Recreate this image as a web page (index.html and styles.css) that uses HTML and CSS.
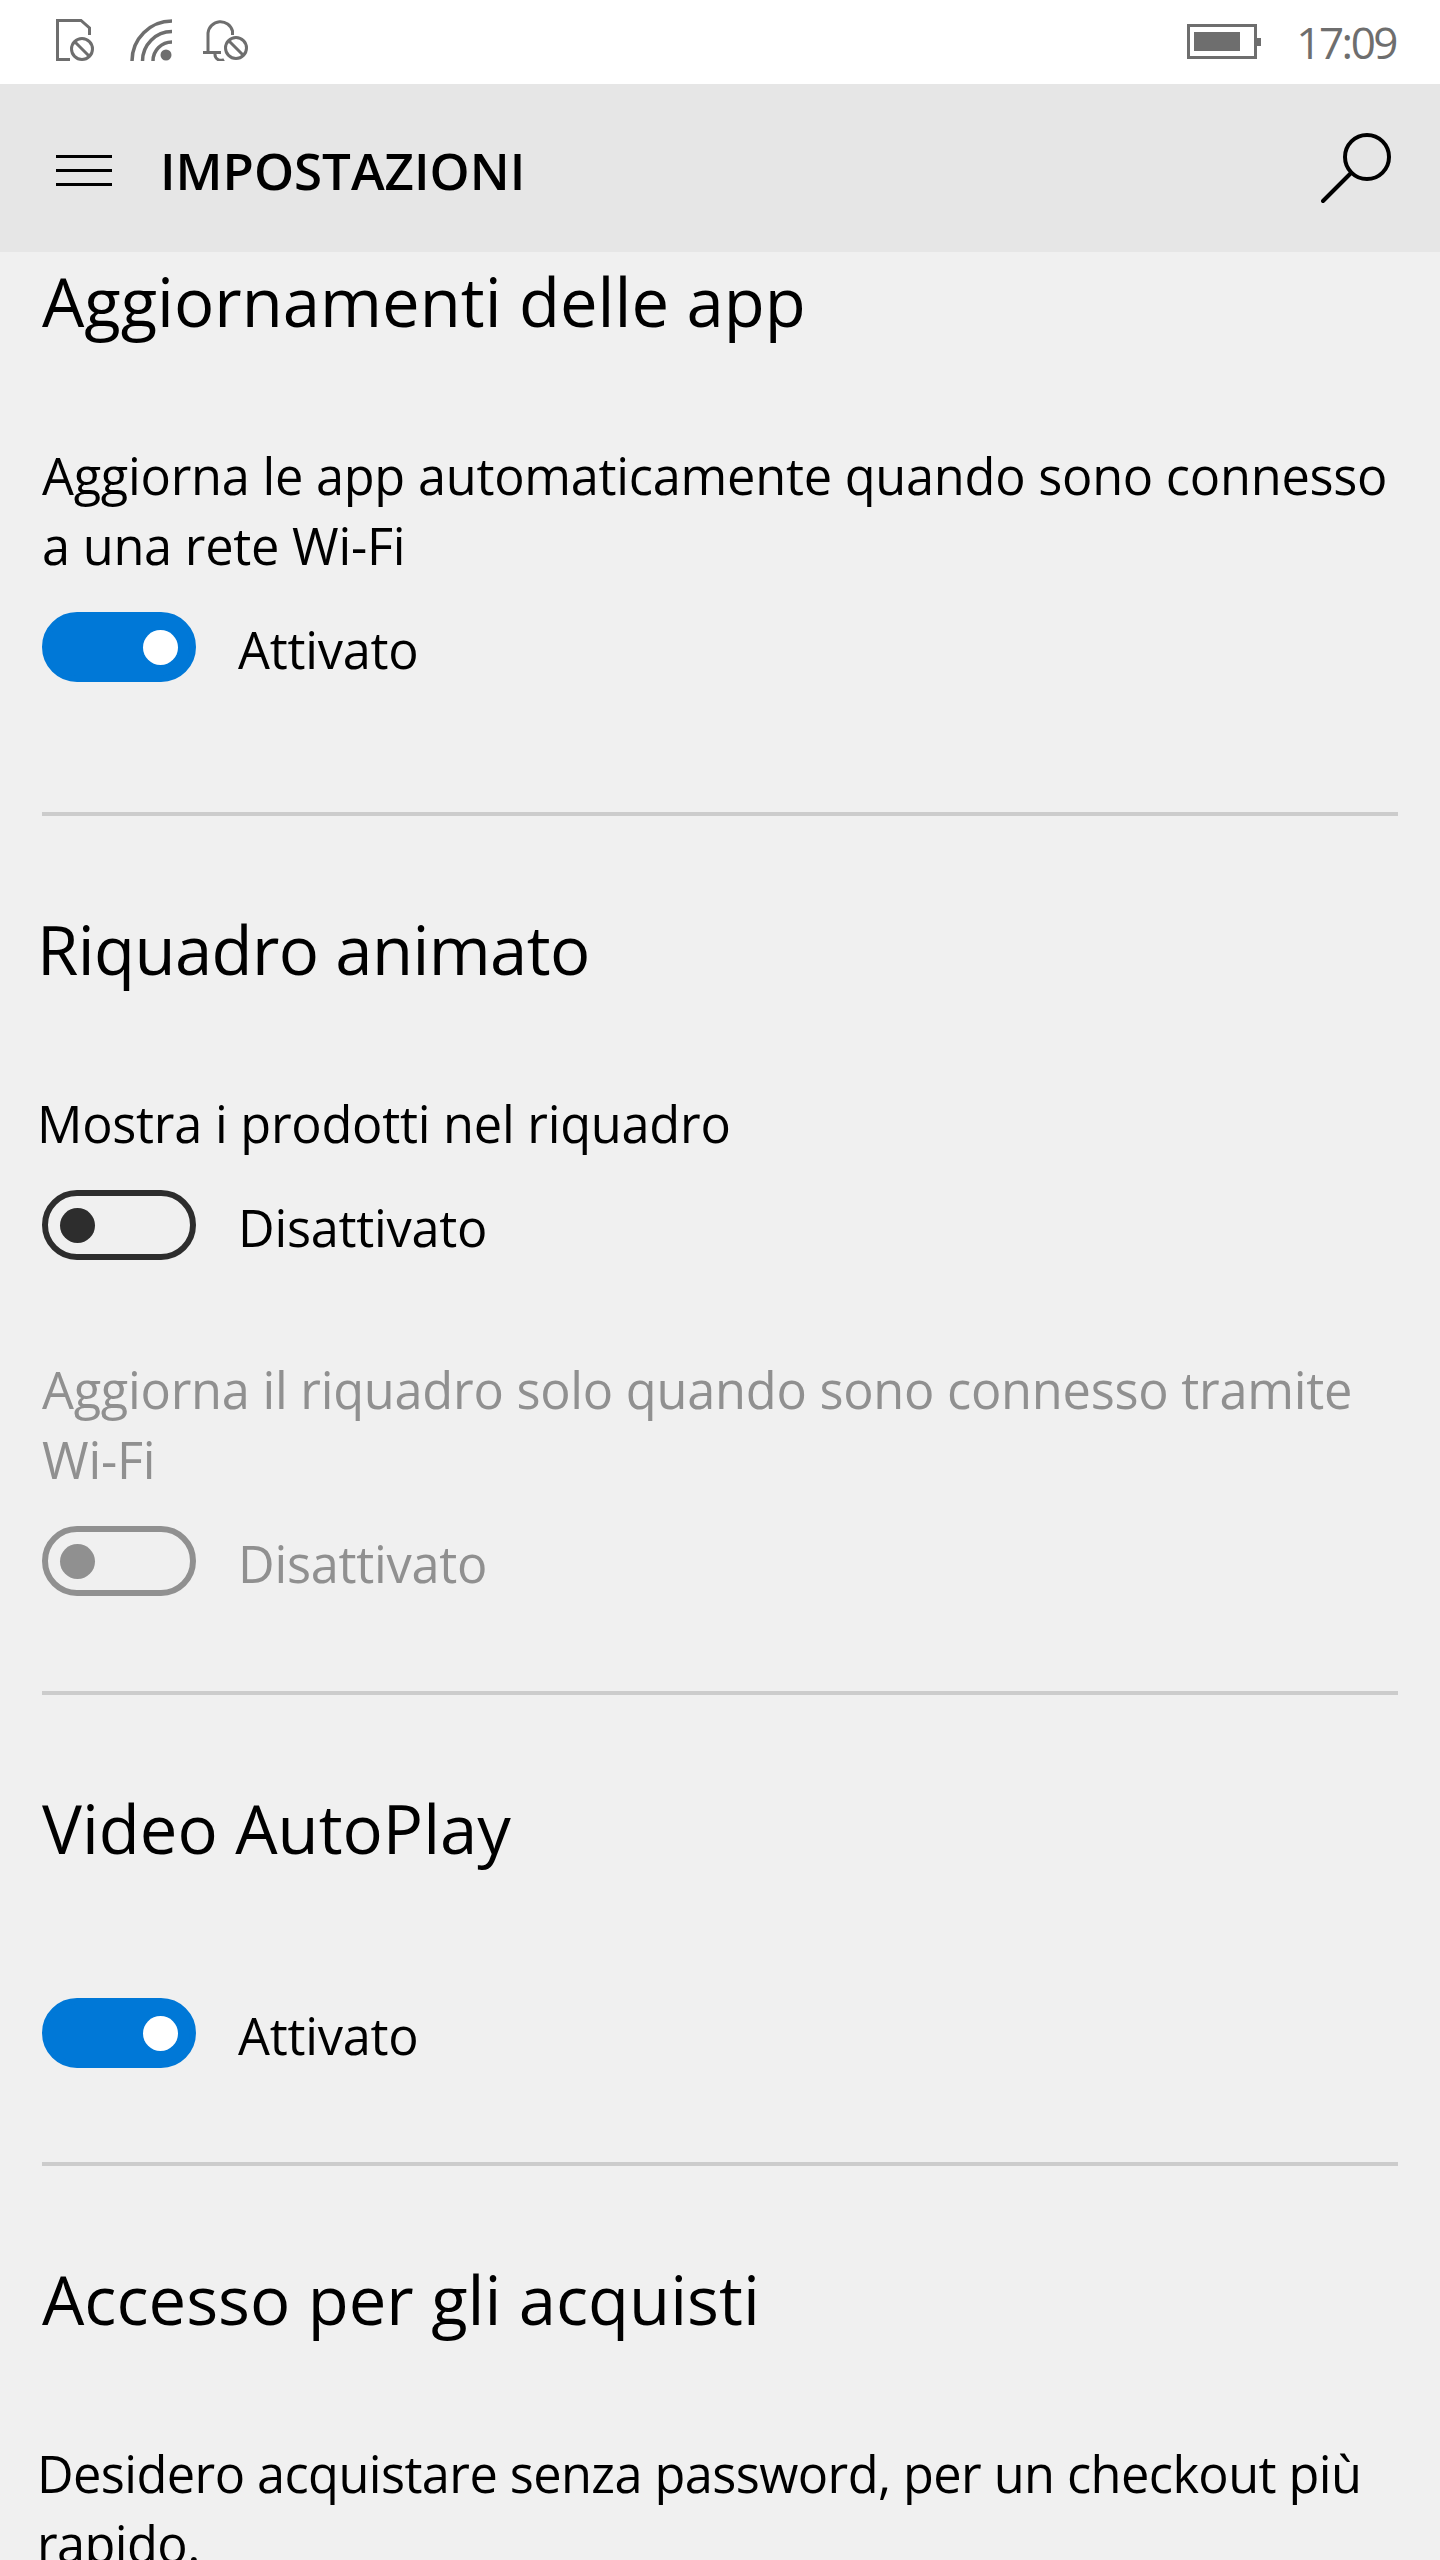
FILE: index.html
```html
<!DOCTYPE html>
<html lang="it">
  <head>
    <meta charset="UTF-8" />
    <meta name="viewport" content="width=device-width, initial-scale=1.0" />
    <title>Impostazioni</title>
    <link rel="stylesheet" href="styles.css">
  </head>
  <body>
    <div class="status-bar">
      <div class="status-icons">
        <svg class="icon-file" width="40" height="42" viewBox="0 0 40 42" fill="none" stroke="#6e6e6e" stroke-width="3">
          <path d="M14 40.5H1.5V1.5H25L33.5 9V16" />
          <circle cx="26" cy="30" r="10.5" />
          <path d="M19 23L33 37" />
        </svg>
        <svg class="icon-wifi" width="44" height="42" viewBox="0 0 44 42" fill="none" stroke="#6e6e6e" stroke-width="3.5">
          <path d="M43 2A40 40 0 0 0 3 42" />
          <path d="M43 12.5A29.5 29.5 0 0 0 13.5 42" />
          <path d="M43 23A19 19 0 0 0 24 42" />
          <circle cx="37" cy="36" r="5.5" fill="#6e6e6e" stroke="none" />
        </svg>
        <svg class="icon-bell" width="46" height="42" viewBox="0 0 46 42" fill="none" stroke="#6e6e6e" stroke-width="3">
          <path d="M0 33.5H18" />
          <path d="M5 33.5V14A12.5 12.5 0 0 1 29.5 12V16" />
          <path d="M12 35A6 6 0 0 0 21 40.5" />
          <circle cx="33" cy="29" r="10.5" />
          <path d="M26 22L40 36" />
        </svg>
      </div>
      <div class="status-right">
        <div class="battery">
          <div class="battery-body"><div class="battery-fill"></div></div>
          <div class="battery-tip"></div>
        </div>
        <span class="clock">17:09</span>
      </div>
    </div>

    <header class="top-bar">
      <div class="top-left">
        <div class="hamburger"><span></span><span></span><span></span></div>
        <h1>IMPOSTAZIONI</h1>
      </div>
      <svg class="icon-search" width="72" height="72" viewBox="0 0 72 72" fill="none" stroke="#000" stroke-width="4" stroke-linecap="round">
        <circle cx="46" cy="25" r="22" />
        <path d="M30 41L2 69" />
      </svg>
    </header>

    <main>
      <section class="group first">
        <h2>Aggiornamenti delle app</h2>
        <div class="setting">
          <p class="label">Aggiorna le app automaticamente quando sono connesso<br>a una rete Wi-Fi</p>
          <div class="switch-row">
            <div class="switch on"><span class="knob"></span></div>
            <span class="state">Attivato</span>
          </div>
        </div>
      </section>

      <section class="group">
        <h2 class="nudge tight">Riquadro animato</h2>
        <div class="setting">
          <p class="label nudge">Mostra i prodotti nel riquadro</p>
          <div class="switch-row">
            <div class="switch"><span class="knob"></span></div>
            <span class="state">Disattivato</span>
          </div>
        </div>
        <div class="setting disabled">
          <p class="label">Aggiorna il riquadro solo quando sono connesso tramite<br>Wi-Fi</p>
          <div class="switch-row">
            <div class="switch"><span class="knob"></span></div>
            <span class="state">Disattivato</span>
          </div>
        </div>
      </section>

      <section class="group">
        <h2>Video AutoPlay</h2>
        <div class="setting no-label">
          <div class="switch-row">
            <div class="switch on"><span class="knob"></span></div>
            <span class="state">Attivato</span>
          </div>
        </div>
      </section>

      <section class="group last">
        <h2>Accesso per gli acquisti</h2>
        <div class="setting">
          <p class="label nudge tight">Desidero acquistare senza password, per un checkout più<br>rapido.</p>
        </div>
      </section>
    </main>
  </body>
</html>
```

FILE: styles.css
```css
* {
  box-sizing: border-box;
}

html,
body {
  height: 2560px;
  margin: 0;
  overflow: hidden;
}

body {
  background: #f0f0f0;
  color: #000;
  font-family: "Open Sans", "Noto Sans", sans-serif;
  font-size: 50.5px;
}

p,
h1,
h2 {
  margin: 0;
}

.status-bar {
  height: 84px;
  background: #fff;
  display: flex;
  justify-content: space-between;
  padding: 19px 44px 0 56px;
}

.status-icons {
  display: flex;
  align-items: flex-start;
  gap: 33px;
}

.icon-bell {
  margin-left: -3px;
}

.status-right {
  display: flex;
  align-items: flex-start;
  gap: 35px;
}

.battery {
  display: flex;
  align-items: center;
  margin-top: 5px;
}

.battery-body {
  width: 70px;
  height: 35px;
  border: 3px solid #6e6e6e;
  padding: 5px 4px;
}

.battery-fill {
  width: 46px;
  height: 100%;
  background: #6e6e6e;
}

.battery-tip {
  width: 4px;
  height: 8px;
  background: #6e6e6e;
}

.clock {
  color: #6e6e6e;
  font-size: 44px;
  line-height: 46px;
  letter-spacing: -2.5px;
}

.top-bar {
  height: 168px;
  background: #e6e6e6;
  display: flex;
  justify-content: space-between;
  align-items: flex-start;
  padding: 48px 47px 0 56px;
}

.top-left {
  display: flex;
  align-items: center;
  gap: 48px;
  height: 76px;
}

.hamburger {
  width: 56px;
  display: grid;
  gap: 11px;

  span {
    display: block;
    height: 3px;
    background: #000;
  }
}

h1 {
  font-size: 51px;
  font-weight: 600;
  line-height: 76px;
}

.group {
  margin: 0 42px;
  padding-top: 88px;
  padding-bottom: 95px;
  border-bottom: 4px solid #ccc;
}

.group.first {
  padding-top: 4px;
  padding-bottom: 130px;
}

.group.last {
  border-bottom: 0;
}

h2 {
  font-size: 67px;
  font-weight: 400;
  line-height: 90px;
}

.nudge {
  margin-left: -5px;
}

.setting {
  margin-top: 93px;
}

.setting.no-label {
  margin-top: 125px;
  margin-bottom: -1px;
}

.label {
  padding-top: 2px;
  line-height: 70px;
  letter-spacing: -0.25px;
  white-space: nowrap;
}

h2.tight {
  letter-spacing: -0.6px;
}

.label.tight {
  letter-spacing: -0.58px;
}

.switch-row {
  margin-top: 31px;
  display: flex;
  align-items: center;
  gap: 42px;
  height: 70px;
  letter-spacing: -0.25px;
}

.no-label .switch-row {
  margin-top: 0;
}

.state {
  padding-top: 5px;
}

.switch {
  width: 154px;
  height: 70px;
  border: 6px solid #2d2d2d;
  border-radius: 35px;
  padding: 0 12px;
  display: flex;
  align-items: center;

  .knob {
    width: 35px;
    height: 35px;
    border-radius: 50%;
    background: #2d2d2d;
  }

  &.on {
    background: #0078d7;
    border-color: #0078d7;
    justify-content: flex-end;

    .knob {
      background: #fff;
    }
  }
}

.disabled {
  color: #909090;

  .switch {
    border-color: #909090;
  }

  .knob {
    background: #909090;
  }
}
```
